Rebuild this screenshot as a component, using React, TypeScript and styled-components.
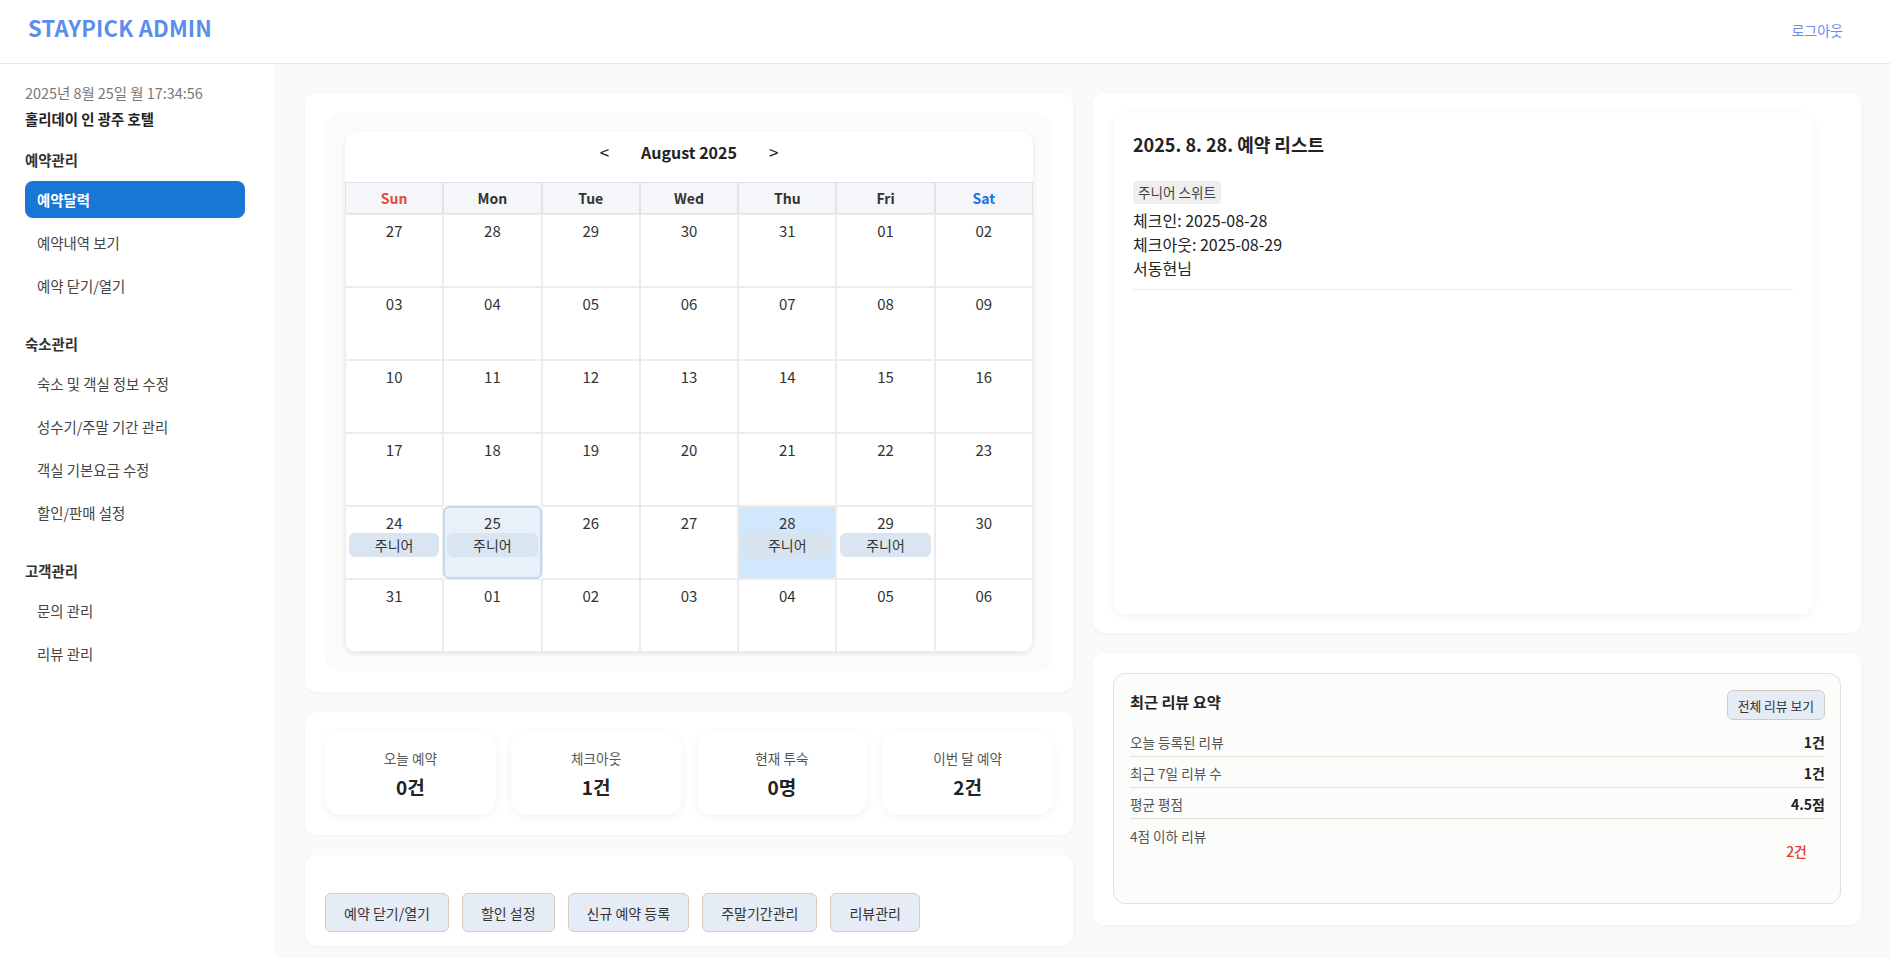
import React from "react";
import styled, { createGlobalStyle, css } from "styled-components";

const GlobalStyle = createGlobalStyle`
  * { box-sizing: border-box; }
  body {
    margin: 0;
    font-family: "Noto Sans CJK KR", "Noto Sans", sans-serif;
    background: #f9fafa;
    color: #222;
  }
  button { font-family: inherit; }
`;

const Header = styled.header`
  height: 64px;
  background: #fff;
  border-bottom: 1px solid #e6e8eb;
  display: flex;
  align-items: center;
  justify-content: space-between;
  padding: 0 47px 4px 28px;
`;

const Logo = styled.h1`
  margin: 0 0 6px;
  font-size: 22px;
  font-weight: 700;
  color: #5b8def;
  letter-spacing: 0.2px;
`;

const Logout = styled.button`
  border: none;
  background: none;
  padding: 0;
  font-size: 14px;
  color: #6a8ee8;
  cursor: pointer;
`;

const Body = styled.div`
  display: flex;
  min-height: calc(100vh - 64px);
`;

const Sidebar = styled.aside`
  width: 275px;
  flex-shrink: 0;
  background: #fff;
  padding: 19px 30px 20px 25px;
`;

const DateText = styled.div`
  font-size: 14.4px;
  line-height: 20px;
  color: #777;
`;

const HotelName = styled.div`
  margin-top: 6px;
  font-size: 14.4px;
  line-height: 20px;
  font-weight: 700;
  color: #222;
`;

const NavSection = styled.div`
  margin-top: 21px;
  & + & {
    margin-top: 30px;
  }
`;

const NavTitle = styled.div`
  font-size: 14.4px;
  line-height: 20px;
  font-weight: 700;
  color: #333;
  margin-bottom: 11px;
`;

const NavItem = styled.div<{ $active?: boolean }>`
  height: 37px;
  display: flex;
  align-items: center;
  padding-left: 12px;
  border-radius: 8px;
  font-size: 14.4px;
  color: #444;
  margin-bottom: 6px;
  ${(p) =>
    p.$active &&
    css`
      background: #1976d2;
      color: #fff;
      font-weight: 700;
    `}
`;

const Main = styled.main`
  flex: 1;
  padding: 29px 29px 30px 30px;
  display: grid;
  grid-template-columns: 1fr 1fr;
  gap: 20px;
  align-items: start;
`;

const Column = styled.div`
  display: flex;
  flex-direction: column;
  gap: 20px;
`;

const Card = styled.section<{ $pad?: string }>`
  background: #fff;
  border-radius: 12px;
  box-shadow: 0 1px 4px rgba(0, 0, 0, 0.04);
  padding: ${(p) => p.$pad || "20px"};
`;

const CalendarArea = styled.div`
  background: #fbfbfa;
  border-radius: 16px;
  padding: 19px 20px 20px;
`;

const CalendarBox = styled.div`
  background: #fff;
  border-radius: 12px;
  box-shadow: 0 2px 5px rgba(0, 0, 0, 0.09);
  overflow: hidden;
`;

const MonthNav = styled.div`
  height: 50px;
  display: flex;
  align-items: flex-start;
  justify-content: center;
  padding-top: 9px;
`;

const NavArrow = styled.button`
  border: none;
  background: none;
  font-size: 17px;
  line-height: 22px;
  color: #222;
  padding: 0 6px;
  cursor: pointer;
`;

const MonthTitle = styled.div`
  font-size: 16px;
  line-height: 22px;
  font-weight: 700;
  color: #222;
  margin: 0 26px;
`;

const Grid = styled.div`
  display: grid;
  grid-template-columns: repeat(7, 1fr);
`;

const DayHead = styled.div<{ $color: string }>`
  height: 32px;
  display: flex;
  align-items: center;
  justify-content: center;
  background: #f5f6f9;
  border: 1px solid #e0e2e6;
  font-size: 14px;
  font-weight: 600;
  color: ${(p) => p.$color};
`;

const Cell = styled.div<{ $today?: boolean; $selected?: boolean }>`
  height: 73px;
  border: 1px solid #ececec;
  padding: 5px 3px;
  display: flex;
  flex-direction: column;
  align-items: stretch;
  ${(p) =>
    p.$selected &&
    css`
      background: #d1e8fc;
    `}
  ${(p) =>
    p.$today &&
    css`
      background: #e8f0fa;
      border: 2px solid #c3d7ee;
      border-radius: 6px;
      padding: 4px 2px;
    `}
`;

const DayNum = styled.div`
  font-size: 15px;
  line-height: 21px;
  text-align: center;
  color: #333;
`;

const Chip = styled.div<{ $muted?: boolean }>`
  height: 24px;
  border-radius: 6px;
  background: ${(p) => (p.$muted ? "#d8e3ed" : "#d9e5f1")};
  font-size: 14px;
  line-height: 24px;
  text-align: center;
  color: #333;
`;

const StatsGrid = styled.div`
  display: grid;
  grid-template-columns: repeat(4, 1fr);
  gap: 15px;
`;

const StatBox = styled.div`
  height: 84px;
  background: #fff;
  border-radius: 16px;
  box-shadow: 0 2px 8px rgba(0, 0, 0, 0.06);
  display: flex;
  flex-direction: column;
  align-items: center;
  justify-content: center;
  gap: 8px;
`;

const StatLabel = styled.div`
  font-size: 13.6px;
  line-height: 19px;
  color: #555;
`;

const StatValue = styled.div`
  font-size: 19px;
  line-height: 22px;
  font-weight: 700;
  color: #222;
`;

const ButtonRow = styled.div`
  display: flex;
  gap: 13px;
`;

const ActionButton = styled.button<{ $small?: boolean }>`
  height: ${(p) => (p.$small ? "30px" : "39px")};
  padding: ${(p) => (p.$small ? "0 10px" : "0 18px")};
  background: #e5ecf5;
  border: 1px solid #d5cbc2;
  border-radius: 6px;
  font-size: ${(p) => (p.$small ? "12.8px" : "14px")};
  color: #333;
  cursor: pointer;
`;

const ListBox = styled.div`
  max-width: 700px;
  height: 501px;
  background: #fff;
  border-radius: 12px;
  box-shadow: 0 2px 8px rgba(0, 0, 0, 0.06);
  padding: 20px;
`;

const ListTitle = styled.h2`
  margin: 0 0 24px;
  font-size: 18px;
  line-height: 22px;
  font-weight: 700;
  color: #222;
`;

const ReservationItem = styled.div`
  padding-bottom: 9px;
  border-bottom: 1px solid #ececec;
`;

const RoomTag = styled.span`
  display: inline-block;
  height: 23px;
  line-height: 23px;
  padding: 0 5px;
  background: #eeeeee;
  border-radius: 4px;
  font-size: 13.6px;
  color: #444;
  margin-bottom: 4px;
`;

const InfoLine = styled.div`
  font-size: 16px;
  line-height: 24px;
  color: #222;
`;

const ReviewBox = styled.div`
  min-height: 231px;
  background: #fcfcfb;
  border: 1px solid #e6e0d9;
  border-radius: 12px;
  padding: 16px 15px 16px 16px;
`;

const ReviewHead = styled.div`
  display: flex;
  justify-content: space-between;
  align-items: flex-start;
  margin-bottom: 6px;
`;

const ReviewTitle = styled.h3`
  margin: 0;
  font-size: 15.2px;
  line-height: 22px;
  font-weight: 700;
  color: #222;
`;

const ReviewRow = styled.div<{ $last?: boolean }>`
  display: flex;
  justify-content: space-between;
  padding: 6px 0 4px;
  border-bottom: 1px solid #e5ded6;
  line-height: 20px;
  ${(p) =>
    p.$last &&
    css`
      flex-direction: column;
      border-bottom: none;
      padding-top: 7px;
    `}
`;

const ReviewLabel = styled.span`
  font-size: 13.6px;
  color: #555;
`;

const ReviewValue = styled.span<{ $alert?: boolean }>`
  font-size: 14px;
  font-weight: 700;
  color: #222;
  ${(p) =>
    p.$alert &&
    css`
      font-weight: 500;
      color: #e53935;
      align-self: flex-end;
      margin-right: 18px;
      line-height: 17px;
      margin-top: -3px;
    `}
`;

type Day = { d: string; chip?: boolean; today?: boolean; selected?: boolean; muted?: boolean };

const weeks: Day[][] = [
  ["27", "28", "29", "30", "31", "01", "02"].map((d) => ({ d })),
  ["03", "04", "05", "06", "07", "08", "09"].map((d) => ({ d })),
  ["10", "11", "12", "13", "14", "15", "16"].map((d) => ({ d })),
  ["17", "18", "19", "20", "21", "22", "23"].map((d) => ({ d })),
  [
    { d: "24", chip: true },
    { d: "25", chip: true, today: true },
    { d: "26" },
    { d: "27" },
    { d: "28", chip: true, selected: true, muted: true },
    { d: "29", chip: true },
    { d: "30" },
  ],
  ["31", "01", "02", "03", "04", "05", "06"].map((d) => ({ d })),
];

const dayHeads = [
  { n: "Sun", c: "#e04b3f" },
  { n: "Mon", c: "#333" },
  { n: "Tue", c: "#333" },
  { n: "Wed", c: "#333" },
  { n: "Thu", c: "#333" },
  { n: "Fri", c: "#333" },
  { n: "Sat", c: "#1a73e8" },
];

const navSections = [
  { title: "예약관리", items: ["예약달력", "예약내역 보기", "예약 닫기/열기"], active: 0 },
  {
    title: "숙소관리",
    items: ["숙소 및 객실 정보 수정", "성수기/주말 기간 관리", "객실 기본요금 수정", "할인/판매 설정"],
    active: -1,
  },
  { title: "고객관리", items: ["문의 관리", "리뷰 관리"], active: -1 },
];

const stats = [
  { label: "오늘 예약", value: "0건" },
  { label: "체크아웃", value: "1건" },
  { label: "현재 투숙", value: "0명" },
  { label: "이번 달 예약", value: "2건" },
];

const actions = ["예약 닫기/열기", "할인 설정", "신규 예약 등록", "주말기간관리", "리뷰관리"];

const reviewRows = [
  { label: "오늘 등록된 리뷰", value: "1건" },
  { label: "최근 7일 리뷰 수", value: "1건" },
  { label: "평균 평점", value: "4.5점" },
];

export default function App() {
  return (
    <>
      <GlobalStyle />
      <Header>
        <Logo>STAYPICK ADMIN</Logo>
        <Logout>로그아웃</Logout>
      </Header>
      <Body>
        <Sidebar>
          <DateText>2025년 8월 25일 월 17:34:56</DateText>
          <HotelName>홀리데이 인 광주 호텔</HotelName>
          {navSections.map((s) => (
            <NavSection key={s.title}>
              <NavTitle>{s.title}</NavTitle>
              {s.items.map((it, i) => (
                <NavItem key={it} $active={i === s.active}>
                  {it}
                </NavItem>
              ))}
            </NavSection>
          ))}
        </Sidebar>
        <Main>
          <Column>
            <Card>
              <CalendarArea>
                <CalendarBox>
                  <MonthNav>
                    <NavArrow>&lt;</NavArrow>
                    <MonthTitle>August 2025</MonthTitle>
                    <NavArrow>&gt;</NavArrow>
                  </MonthNav>
                  <Grid>
                    {dayHeads.map((h) => (
                      <DayHead key={h.n} $color={h.c}>
                        {h.n}
                      </DayHead>
                    ))}
                    {weeks.flat().map((day, i) => (
                      <Cell key={i} $today={day.today} $selected={day.selected}>
                        <DayNum>{day.d}</DayNum>
                        {day.chip && <Chip $muted={day.muted}>주니어</Chip>}
                      </Cell>
                    ))}
                  </Grid>
                </CalendarBox>
              </CalendarArea>
            </Card>
            <Card $pad="19px 20px 20px">
              <StatsGrid>
                {stats.map((s) => (
                  <StatBox key={s.label}>
                    <StatLabel>{s.label}</StatLabel>
                    <StatValue>{s.value}</StatValue>
                  </StatBox>
                ))}
              </StatsGrid>
            </Card>
            <Card $pad="38px 20px 14px">
              <ButtonRow>
                {actions.map((a) => (
                  <ActionButton key={a}>{a}</ActionButton>
                ))}
              </ButtonRow>
            </Card>
          </Column>
          <Column>
            <Card $pad="20px 20px 19px">
              <ListBox>
                <ListTitle>2025. 8. 28. 예약 리스트</ListTitle>
                <ReservationItem>
                  <RoomTag>주니어 스위트</RoomTag>
                  <InfoLine>체크인: 2025-08-28</InfoLine>
                  <InfoLine>체크아웃: 2025-08-29</InfoLine>
                  <InfoLine>서동현님</InfoLine>
                </ReservationItem>
              </ListBox>
            </Card>
            <Card $pad="20px 20px 21px">
              <ReviewBox>
                <ReviewHead>
                  <ReviewTitle>최근 리뷰 요약</ReviewTitle>
                  <ActionButton $small>전체 리뷰 보기</ActionButton>
                </ReviewHead>
                {reviewRows.map((r) => (
                  <ReviewRow key={r.label}>
                    <ReviewLabel>{r.label}</ReviewLabel>
                    <ReviewValue>{r.value}</ReviewValue>
                  </ReviewRow>
                ))}
                <ReviewRow $last>
                  <ReviewLabel>4점 이하 리뷰</ReviewLabel>
                  <ReviewValue $alert>2건</ReviewValue>
                </ReviewRow>
              </ReviewBox>
            </Card>
          </Column>
        </Main>
      </Body>
    </>
  );
}
